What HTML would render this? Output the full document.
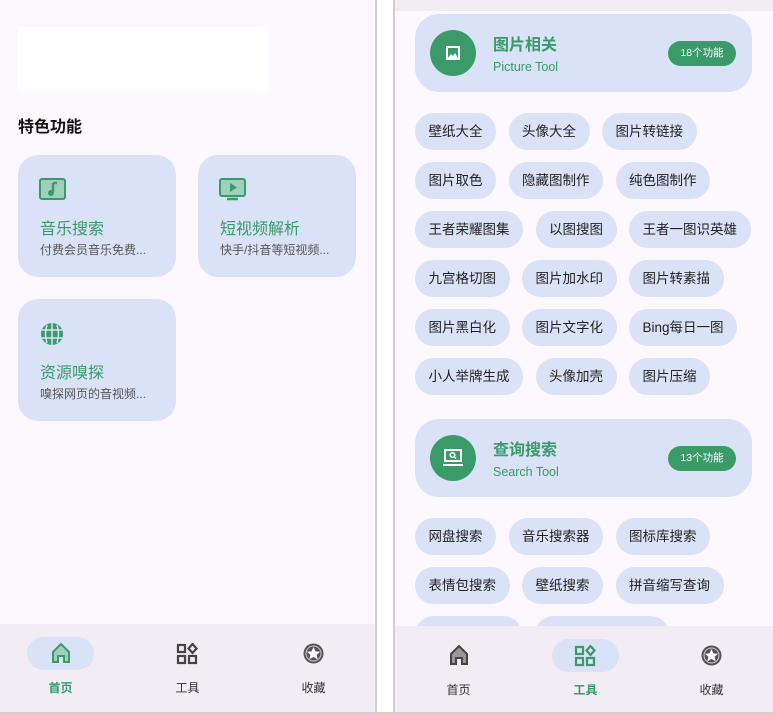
<!DOCTYPE html>
<html><head><meta charset="utf-8"><style>
*{margin:0;padding:0;box-sizing:border-box}
body{width:773px;height:714px;background:#fff;font-family:"Liberation Sans","Noto Sans CJK SC",sans-serif;position:relative;overflow:hidden}
.abs{position:absolute}
.panel{position:absolute;top:0;height:713px;background:#fdf8fd;overflow:hidden}
.card{position:absolute;background:#d9e2f7;border-radius:20px}
.card .t{position:absolute;left:22px;top:60px;font-size:16px;color:#3a9a68}
.card .d{position:absolute;left:22px;top:86px;font-size:12px;color:#555}
.card svg{position:absolute;left:21px;top:23px}
.nav{position:absolute;left:0;right:0;bottom:0;background:#f2ecf5}
.ni{position:absolute;width:67px;text-align:center;font-size:12px;color:#333}
.pill{position:absolute;width:67px;height:33px;border-radius:17px;background:#d9e2f7}
.big{position:absolute;left:20px;width:337px;height:78px;background:#d9e2f7;border-radius:24px}
.circ{position:absolute;left:15px;top:16px;width:46px;height:46px;border-radius:50%;background:#3a9a68}
.bt{position:absolute;left:78px;top:17px;font-size:16px;font-weight:bold;color:#3a9a68}
.bs{position:absolute;left:78px;top:46px;font-size:12.5px;color:#3a9a68}
.badge{position:absolute;right:16px;top:27px;width:68px;height:25px;border-radius:13px;background:#3a9a68;color:#fff;font-size:10.5px;text-align:center;line-height:25px}
.chips{position:absolute;left:20px;width:345px;display:flex;flex-wrap:wrap;gap:12px 12.5px}
.chip{height:37px;line-height:37px;padding:0 13.5px;border-radius:19px;background:#d9e2f7;font-size:13.5px;color:#222}
</style></head><body>
<div class="panel" style="left:0;width:377px;border-right:2px solid #d0ced2">
  <div class="abs" style="left:18px;top:27px;width:250px;height:65px;background:#fff"></div>
  <div class="abs" style="left:18px;top:113px;font-size:16px;font-weight:bold;color:#111">特色功能</div>
  <div class="card" style="left:18px;top:155px;width:158px;height:122px">
    <svg width="28" height="24" viewBox="0 0 28 24"><rect x="1" y="1" width="25" height="20" rx="2" fill="#9fd0bb" stroke="#3a9a68" stroke-width="2"/><path d="M14 5v9" stroke="#3a9a68" stroke-width="2.5"/><path d="M14 5h4" stroke="#3a9a68" stroke-width="2.5"/><circle cx="12" cy="15" r="3" fill="#3a9a68"/></svg>
    <div class="t">音乐搜索</div><div class="d">付费会员音乐免费...</div></div>
  <div class="card" style="left:198px;top:155px;width:158px;height:122px">
    <svg width="28" height="24" viewBox="0 0 28 24"><rect x="1" y="1" width="25" height="17" rx="2" fill="#9fd0bb" stroke="#3a9a68" stroke-width="2"/><path d="M11 5l7 4.5-7 4.5z" fill="#3a9a68"/><path d="M8 21h11" stroke="#3a9a68" stroke-width="2.5"/></svg>
    <div class="t">短视频解析</div><div class="d">快手/抖音等短视频...</div></div>
  <div class="card" style="left:18px;top:299px;width:158px;height:122px">
    <svg width="28" height="26" viewBox="0 0 28 26"><circle cx="13" cy="12" r="11" fill="#3a9a68"/><path d="M3 8h20M3 16h20M13 1v22M8 3q-3 9 0 18M18 3q3 9 0 18" stroke="#d9e2f7" stroke-width="1.5" fill="none"/></svg>
    <div class="t">资源嗅探</div><div class="d">嗅探网页的音视频...</div></div>
  <div class="nav" style="top:624px">
    <div class="pill" style="left:27px;top:13px"></div>
    <svg class="abs" style="left:49px;top:17px" width="24" height="24" viewBox="0 0 24 24"><path d="M4 11L12 3l8 8v10h-5v-6h-6v6H4z" fill="#9fd0bb" stroke="#3a9a68" stroke-width="2"/></svg>
    <div class="ni" style="left:27px;top:55px;color:#3a9a68;font-weight:bold">首页</div>
    <svg class="abs" style="left:176px;top:19px" width="22" height="22" viewBox="0 0 22 22"><g fill="none" stroke="#444" stroke-width="2.2"><rect x="2" y="2" width="7" height="7"/><rect x="2" y="13" width="7" height="7"/><rect x="13" y="13" width="7" height="7"/><path d="M16.5 1l4 4.5-4 4.5-4-4.5z"/></g></svg>
    <div class="ni" style="left:154px;top:55px">工具</div>
    <svg class="abs" style="left:302px;top:18px" width="23" height="23" viewBox="0 0 23 23"><circle cx="11.5" cy="11.5" r="10" fill="#555"/><circle cx="11.5" cy="11.5" r="7.5" fill="none" stroke="#ccc" stroke-width="1"/><path d="M11.5 5l2 4.4 4.6.4-3.5 3 1.1 4.6-4.2-2.5-4.2 2.5 1.1-4.6-3.5-3 4.6-.4z" fill="#fff"/></svg>
    <div class="ni" style="left:280px;top:55px">收藏</div>
  </div>
</div>
<div class="panel" style="left:393px;width:380px;border-left:2px solid #d0ced2">
  <div class="abs" style="left:0;top:0;width:380px;height:11px;background:#f2ecf5"></div>
  <div class="big" style="top:14px"><div class="circ"><svg style="position:absolute;left:15px;top:15px" width="16" height="16" viewBox="0 0 16 16"><rect x="1" y="1" width="14" height="14" fill="#fff"/><rect x="3" y="3" width="10" height="10" fill="#3a9a68"/><path d="M3 13l3-4 2 2 2-3 3 5z" fill="#fff"/></svg></div><div class="bt">图片相关</div><div class="bs">Picture Tool</div><div class="badge">18个功能</div></div>
  <div class="chips" style="top:113px">
    <div class="chip">壁纸大全</div><div class="chip">头像大全</div><div class="chip">图片转链接</div>
    <div class="chip">图片取色</div><div class="chip">隐藏图制作</div><div class="chip">纯色图制作</div>
    <div class="chip">王者荣耀图集</div><div class="chip">以图搜图</div><div class="chip">王者一图识英雄</div>
    <div class="chip">九宫格切图</div><div class="chip">图片加水印</div><div class="chip">图片转素描</div>
    <div class="chip">图片黑白化</div><div class="chip">图片文字化</div><div class="chip">Bing每日一图</div>
    <div class="chip">小人举牌生成</div><div class="chip">头像加壳</div><div class="chip">图片压缩</div>
  </div>
  <div class="big" style="top:419px"><div class="circ"><svg style="position:absolute;left:12px;top:13px" width="22" height="20" viewBox="0 0 22 20"><rect x="3" y="2" width="16" height="11" fill="none" stroke="#fff" stroke-width="2"/><path d="M1 17h20" stroke="#fff" stroke-width="2"/><circle cx="10.5" cy="7" r="2.3" fill="none" stroke="#fff" stroke-width="1.5"/><path d="M12 8.5l2 2" stroke="#fff" stroke-width="1.5"/></svg></div><div class="bt">查询搜索</div><div class="bs">Search Tool</div><div class="badge">13个功能</div></div>
  <div class="chips" style="top:518px">
    <div class="chip">网盘搜索</div><div class="chip">音乐搜索器</div><div class="chip">图标库搜索</div>
    <div class="chip">表情包搜索</div><div class="chip">壁纸搜索</div><div class="chip">拼音缩写查询</div>
    <div class="chip" style="width:107px"></div><div class="chip" style="width:134px"></div>
  </div>
  <div class="nav" style="top:626px">
    <svg class="abs" style="left:52px;top:17px" width="24" height="24" viewBox="0 0 24 24"><path d="M4 11L12 3l8 8v10h-5v-6h-6v6H4z" fill="#999" stroke="#444" stroke-width="2"/></svg>
    <div class="ni" style="left:30px;top:55px">首页</div>
    <div class="pill" style="left:157px;top:13px"></div>
    <svg class="abs" style="left:179px;top:19px" width="22" height="22" viewBox="0 0 22 22"><g fill="none" stroke="#3a9a68" stroke-width="2.2"><rect x="2" y="2" width="7" height="7"/><rect x="2" y="13" width="7" height="7"/><rect x="13" y="13" width="7" height="7"/><path d="M16.5 1l4 4.5-4 4.5-4-4.5z"/></g></svg>
    <div class="ni" style="left:157px;top:55px;color:#3a9a68;font-weight:bold">工具</div>
    <svg class="abs" style="left:305px;top:18px" width="23" height="23" viewBox="0 0 23 23"><circle cx="11.5" cy="11.5" r="10" fill="#555"/><circle cx="11.5" cy="11.5" r="7.5" fill="none" stroke="#ccc" stroke-width="1"/><path d="M11.5 5l2 4.4 4.6.4-3.5 3 1.1 4.6-4.2-2.5-4.2 2.5 1.1-4.6-3.5-3 4.6-.4z" fill="#fff"/></svg>
    <div class="ni" style="left:283px;top:55px">收藏</div>
  </div>
</div>
<div class="abs" style="left:0;top:712px;width:773px;height:2px;background:#d0ced2"></div>
</body></html>
